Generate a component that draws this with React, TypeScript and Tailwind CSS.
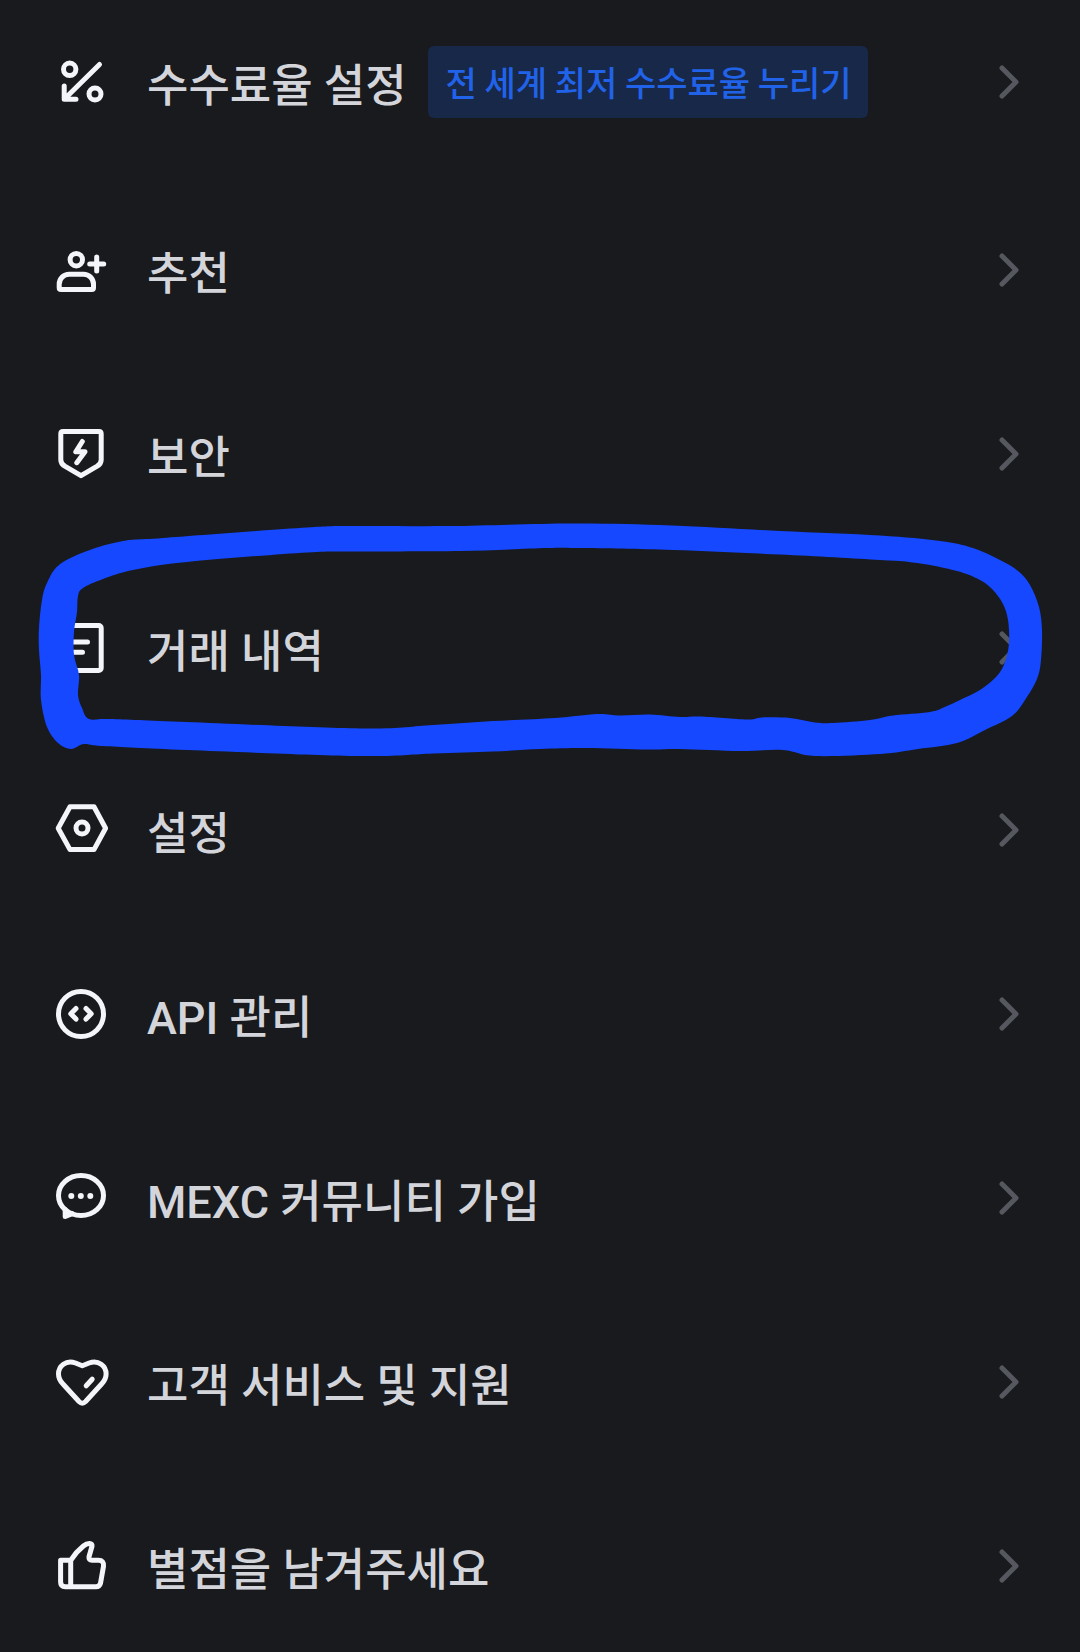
import type { ReactNode } from 'react';
import { clsx } from 'clsx';

type Point = [number, number];

type MenuItem = {
  label: string;
  icon: ReactNode;
  badge?: string;
  marked?: boolean;
  className?: string;
};

const MENU: MenuItem[] = [
  {
    label: '수수료율 설정',
    badge: '전 세계 최저 수수료율 누리기',
    className: 'mb-1',
    icon: (
      <>
        <circle cx="16.7" cy="15.3" r="6.2" />
        <circle cx="42" cy="40" r="6" />
        <path d="M46.5 10.5L12 44.5M11.2 32v13.2H23" />
      </>
    ),
  },
  {
    label: '추천',
    icon: (
      <>
        <circle cx="23.3" cy="17.7" r="6.2" />
        <path d="M43.7 15v14M36.7 22h14" />
        <path d="M6.2 42.2a10 10 0 0 1 10-10h14.3a10 10 0 0 1 10 10v3.6q0 1.8-1.8 1.8H8q-1.8 0-1.8-1.8z" />
      </>
    ),
  },
  {
    label: '보안',
    className: 'mb-[10px]',
    icon: (
      <>
        <path d="M10 5.5h36q2.2 0 2.2 2.2v26q0 4-4 6.5L28 49.7l-16.2-9.5q-4-2.5-4-6.5v-26q0-2.2 2.2-2.2z" />
        <path d="M29.3 15.5l-6.5 10.3H32l-8.2 10.9" />
      </>
    ),
  },
  {
    label: '거래 내역',
    marked: true,
    icon: (
      <>
        <rect x="7.8" y="5.5" width="40.4" height="45" rx="2.5" />
        <path d="M18 22h16.5M18 32.3h11.5" />
      </>
    ),
  },
  {
    label: '설정',
    className: '-mt-[2px]',
    icon: (
      <>
        <path d="M17 4.8h24l11.6 21.4L41 47.6H17L5.2 26.2z" />
        <circle cx="29" cy="26" r="6" />
      </>
    ),
  },
  {
    label: 'API 관리',
    icon: (
      <>
        <circle cx="28" cy="28" r="22.5" />
        <path d="M23 22.5l-5.2 5.3 5.2 5.3M33 22.5l5.2 5.3-5.2 5.3" />
      </>
    ),
  },
  {
    label: 'MEXC 커뮤니티 가입',
    icon: (
      <>
        <ellipse cx="28" cy="25.5" rx="22.5" ry="20" />
        <path d="M12.2 39.5v7l7-2.8" />
        <g fill="currentColor" stroke="none">
          <circle cx="18.3" cy="26" r="3" />
          <circle cx="27.8" cy="26" r="3" />
          <circle cx="37.3" cy="26" r="3" />
        </g>
      </>
    ),
  },
  {
    label: '고객 서비스 및 지원',
    icon: (
      <>
        <path d="M29.3 11.8L22.5 9C13 5.5 5.5 12 5.5 20c0 5 2 7.5 4.5 10l16 17.5q3.3 3.3 6.6 0l16-17.5c2.4-2.5 4.5-5 4.5-10 0-8-7.5-14.5-17-11z" />
        <path d="M33.2 31.8l6-6.6" />
      </>
    ),
  },
  {
    label: '별점을 남겨주세요',
    icon: (
      <path d="M17.7 22.3H7.6V44q0 4.7 4.7 4.7H43q3.5 0 4.5-3.5l3-17q.7-5.9-5-5.9h-6.5q-3.5 0-3-3.5l3-10.5q.4-3-2.6-2.9-3 .1-6 2.6-7.5 6-12.7 14.3zM17.7 22.3v26" />
    ),
  },
];

// Hand drawn marker: outer and inner edge of the stroke
const MARKER_OUTER: Point[] = [
  [360, 526], [307, 527.5], [163, 538], [123, 541], [87, 551], [59, 565], [47, 583], [42, 600],
  [39, 628], [39, 650], [41, 675], [41, 700], [47, 727], [58, 743], [71, 749], [84, 744], [103, 746],
  [187, 750], [360, 756], [433, 753.5], [493, 751.5], [540, 749], [587, 748], [647, 749.5], [680, 749],
  [740, 751], [783, 750], [815, 756], [880, 754], [918, 749], [957, 743], [985, 730], [1012, 716],
  [1025, 700], [1037, 679], [1041, 660], [1042, 630], [1039, 607], [1030, 585], [1018, 571], [1000, 560],
  [973, 548], [940, 541], [880, 535.5], [780, 531], [672, 525.5], [573, 523.5], [450, 526],
];

const MARKER_INNER: Point[] = [
  [360, 551.5], [307, 552.5], [187, 562], [133, 570], [103, 579], [83, 588], [78, 596], [77, 612],
  [74, 632], [74, 655], [79, 675], [78, 695], [82, 708], [89, 719], [110, 719], [187, 722], [360, 728.5],
  [433, 725], [493, 721], [555, 718], [597, 714], [620, 715.5], [650, 714.5], [680, 717], [700, 716.5],
  [747, 719.5], [762, 717.5], [790, 718], [815, 722.5], [833, 723], [870, 720], [893, 715.5], [930, 712],
  [947, 706], [960, 700], [980, 690], [997, 676], [1005, 662], [1009, 643], [1008, 620], [1003, 604],
  [993, 590], [980, 580], [957, 571], [917, 563], [880, 560], [780, 554.5], [673, 550], [580, 548],
  [547, 548], [460, 551],
];

// Closed Catmull-Rom curve through the points
function smoothPath(points: Point[]) {
  const n = points.length;
  const at = (i: number) => points[(i + n) % n];
  const parts = points.map((p, i) => {
    const prev = at(i - 1);
    const next = at(i + 1);
    const after = at(i + 2);
    const c1 = [p[0] + (next[0] - prev[0]) / 6, p[1] + (next[1] - prev[1]) / 6];
    const c2 = [next[0] - (after[0] - p[0]) / 6, next[1] - (after[1] - p[1]) / 6];
    return `C${c1.join(' ')} ${c2.join(' ')} ${next.join(' ')}`;
  });
  return `M${points[0].join(' ')}${parts.join('')}Z`;
}

function Marker() {
  return (
    <svg
      viewBox="0 512 1080 260"
      preserveAspectRatio="none"
      className="pointer-events-none absolute inset-x-0 -top-[100px] h-[260px] w-full"
      aria-hidden="true"
    >
      <path d={smoothPath(MARKER_OUTER) + smoothPath(MARKER_INNER)} fill="#1548ff" fillRule="evenodd" />
    </svg>
  );
}

function Chevron() {
  return (
    <svg
      viewBox="0 0 24 36"
      className="ml-auto h-9 w-6 shrink-0 text-[#55585f]"
      fill="none"
      stroke="currentColor"
      strokeWidth="5"
      strokeLinecap="round"
      strokeLinejoin="round"
      aria-hidden="true"
    >
      <path d="M5 4l14 14L5 32" />
    </svg>
  );
}

function MenuRow({ item }: { item: MenuItem }) {
  return (
    <li className={clsx('relative', item.className)}>
      <a href="#" className="flex h-[72px] items-center pl-[53px] pr-[59px]">
        <svg
          viewBox="0 0 56 56"
          className="size-14 shrink-0 text-[#f4f5fa]"
          fill="none"
          stroke="currentColor"
          strokeWidth="5"
          strokeLinecap="round"
          strokeLinejoin="round"
          aria-hidden="true"
        >
          {item.icon}
        </svg>
        <span className="ml-[38px] whitespace-nowrap pt-[10px] font-['Roboto','Noto_Sans_CJK_KR',sans-serif] text-[45px] font-medium leading-[52px] text-[#d3d5db]">
          {item.label}
        </span>
        {item.badge && (
          <span className="ml-[21px] flex h-[72px] items-center whitespace-nowrap rounded-md bg-[#182848] pl-[18px] pr-4 font-['Noto_Sans_CJK_KR',sans-serif] text-[34px] font-medium leading-[48px] text-[#2163e8]">
            {item.badge}
          </span>
        )}
        <Chevron />
      </a>
      {item.marked && <Marker />}
    </li>
  );
}

export default function App() {
  return (
    <nav className="min-h-screen overflow-hidden bg-[#191a1d] pt-[46px] pb-12">
      <ul className="flex flex-col gap-28">
        {MENU.map((item) => (
          <MenuRow key={item.label} item={item} />
        ))}
      </ul>
    </nav>
  );
}
